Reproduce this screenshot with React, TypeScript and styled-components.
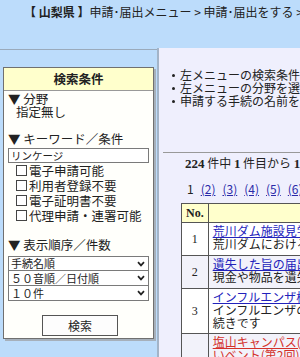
import React from 'react'
import styled, { createGlobalStyle } from 'styled-components'

const GlobalStyle = createGlobalStyle`
  html, body {
    margin: 0;
    padding: 0;
    overflow: hidden;
    background: #bcdcfb;
  }
  body {
    font-family: "Noto Sans CJK JP", "Noto Sans", sans-serif;
    color: #222;
  }
`

const Page = styled.div`
  width: 300px;
  height: 357px;
  overflow: hidden;
  background: #bcdcfb;
`

const Breadcrumb = styled.div`
  height: 48px;
  box-sizing: border-box;
  padding: 4px 0 0 24px;
  font-size: 12px;
  line-height: 16px;
  white-space: nowrap;
  color: #222;

  b {
    font-weight: bold;
  }
`

const Main = styled.div`
  display: flex;
  width: 520px;
`

const SideColumn = styled.div`
  width: 157px;
  flex: none;
  margin-top: 1px;
  border-top: 1px solid #9aaabb;
  padding: 17px 0 0 3px;
  box-sizing: border-box;
`

const SearchPanel = styled.div`
  width: 151px;
  box-sizing: border-box;
  background: #fffffb;
  border: 1px solid #707070;
  box-shadow: 2px 2px 0 #a6b0bb;
  padding-bottom: 2px;
`

const PanelTitle = styled.div`
  height: 22px;
  line-height: 22px;
  background: #ffffcc;
  border-bottom: 1px solid #999;
  text-align: center;
  font-size: 12.5px;
  font-weight: bold;
`

const Section = styled.div<{ $top?: number }>`
  padding: 0 4px;
  margin-top: ${({ $top }) => $top ?? 0}px;
`

const Heading = styled.div`
  font-size: 12.5px;
  line-height: 13px;
  height: 13px;
  white-space: nowrap;
`

const Value = styled.div`
  font-size: 12.5px;
  line-height: 13px;
  height: 13px;
  padding-left: 8px;
`

const KeywordInput = styled.input`
  display: block;
  width: 141px;
  height: 15px;
  box-sizing: border-box;
  margin: 3px 0 0;
  padding: 0 2px;
  border: 1px solid #7a7a7a;
  font-family: inherit;
  font-size: 10.5px;
  line-height: 13px;
  color: #222;
  background: #fff;
  outline: none;
`

const CheckRow = styled.label`
  display: flex;
  align-items: center;
  height: 15px;
  padding-left: 8px;
  font-size: 12.5px;
  line-height: 15px;
  white-space: nowrap;
`

const Box = styled.span`
  display: inline-block;
  width: 9px;
  height: 9px;
  border: 1px solid #444;
  margin-right: 2px;
  background: #fff;
`

const SelectBox = styled.div<{ $first?: boolean }>`
  display: flex;
  align-items: center;
  justify-content: space-between;
  width: 141px;
  height: 15px;
  box-sizing: border-box;
  margin-top: ${({ $first }) => ($first ? 5 : 0)}px;
  border: 1px solid #7a7a7a;
  border-top-width: ${({ $first }) => ($first ? 1 : 0)}px;
  padding: 0 3px 0 2px;
  background: #fff;
  font-size: 11px;
  line-height: 13px;
  white-space: nowrap;
`

const Chevron = () => (
  <svg width="8" height="6" viewBox="0 0 8 6">
    <path d="M1 1.2 L4 4.4 L7 1.2" fill="none" stroke="#222" strokeWidth="1.7" />
  </svg>
)

const ButtonRow = styled.div`
  display: flex;
  justify-content: center;
  margin-top: 14px;
`

const SearchButton = styled.button`
  width: 76px;
  height: 21px;
  padding: 0;
  border: 1px solid #555;
  background: #fdfdfd;
  font-family: inherit;
  font-size: 12px;
  line-height: 19px;
  color: #222;
  margin-left: 3px;
`

const ContentColumn = styled.div`
  flex: 1;
  height: 320px;
  background: #efeffd;
  border-left: 2px solid #a3b4c8;
`

const Notes = styled.ul`
  margin: 20px 0 0;
  padding-left: 21px;
  font-size: 12px;
  line-height: 13px;
  white-space: nowrap;

  li {
    list-style: none;
    position: relative;
    height: 13px;
  }
  li::before {
    content: '';
    position: absolute;
    left: -8px;
    top: 6px;
    width: 3px;
    height: 3px;
    border-radius: 50%;
    background: #222;
  }
`

const Rule = styled.hr`
  margin: 45px 0 0 4px;
  border: 0;
  border-top: 1px solid #999;
`

const Count = styled.div`
  margin: 2px 0 0 26px;
  font-size: 12px;
  line-height: 16px;
  white-space: nowrap;

  b {
    font-family: "Liberation Serif", serif;
    font-size: 13px;
  }
`

const Pager = styled.div`
  margin: 10px 0 0 28px;
  font-size: 12px;
  line-height: 14px;
  white-space: nowrap;

  a {
    color: #2a2aa8;
    text-decoration: underline;
    margin-left: 7px;
  }
`

const ResultTable = styled.table`
  margin: 7px 0 0 22px;
  border-collapse: collapse;
  width: 400px;
  font-size: 12px;
  background: #fff;

  th, td {
    border: 1px solid #555;
    padding: 0 4px;
  }
  th {
    background: #ffffcc;
    height: 18px;
    font-family: "Liberation Serif", serif;
    font-size: 12px;
    text-align: left;
  }
`

const Row = styled.tr<{ $shade?: boolean }>`
  background: ${({ $shade }) => ($shade ? '#f2f2fa' : '#fff')};
`

const NoCell = styled.td`
  width: 17px;
  text-align: center;
  font-family: "Liberation Serif", serif;
  font-size: 12px;
`

const TitleCell = styled.td<{ $height: number }>`
  height: ${({ $height }) => $height}px;
  line-height: 13px;
  white-space: nowrap;
  vertical-align: top;
  padding-top: 1px !important;

  a {
    color: #2222bb;
    text-decoration: underline;
  }
  a.alert {
    color: #d4302a;
  }
`

const Desc = styled.div<{ $alert?: boolean }>`
  color: ${({ $alert }) => ($alert ? '#d4302a' : '#222')};
  text-decoration: ${({ $alert }) => ($alert ? 'underline' : 'none')};
`

const results = [
  { no: '1', title: '荒川ダム施設見学', desc: ['荒川ダムにおける施設見学'], h: 31 },
  { no: '2', title: '遺失した旨の届出', desc: ['現金や物品を遺失した'], h: 31 },
  { no: '3', title: 'インフルエンザ様疾患', desc: ['インフルエンザの集団発生', '続きです'], h: 43 },
  { no: '', title: '塩山キャンパス(高校', desc: ['いベント(第2回)'], h: 40, alert: true },
]

export default function App() {
  return (
    <Page>
      <GlobalStyle />
      <Breadcrumb>
        <b>【 山梨県 】</b>申請･届出メニュー &gt; 申請･届出をする &gt;
      </Breadcrumb>
      <Main>
        <SideColumn>
          <SearchPanel>
            <PanelTitle>検索条件</PanelTitle>
            <Section $top={1}>
              <Heading>▼ 分野</Heading>
              <Value>指定無し</Value>
            </Section>
            <Section $top={14}>
              <Heading>▼ キーワード／条件</Heading>
              <KeywordInput defaultValue="リンケージ" />
              <CheckRow><Box />電子申請可能</CheckRow>
              <CheckRow><Box />利用者登録不要</CheckRow>
              <CheckRow><Box />電子証明書不要</CheckRow>
              <CheckRow><Box />代理申請・連署可能</CheckRow>
            </Section>
            <Section $top={15}>
              <Heading>▼ 表示順序／件数</Heading>
              <SelectBox $first>手続名順<Chevron /></SelectBox>
              <SelectBox>５０音順／日付順<Chevron /></SelectBox>
              <SelectBox>１０件<Chevron /></SelectBox>
            </Section>
            <ButtonRow>
              <SearchButton>検索</SearchButton>
            </ButtonRow>
          </SearchPanel>
        </SideColumn>
        <ContentColumn>
          <Notes>
            <li>左メニューの検索条件を指定して</li>
            <li>左メニューの分野を選択して</li>
            <li>申請する手続の名前をクリック</li>
          </Notes>
          <Rule />
          <Count>
            <b>224</b> 件中 <b>1</b> 件目から <b>10</b> 件目
          </Count>
          <Pager>
            1<a>(2)</a><a>(3)</a><a>(4)</a><a>(5)</a><a>(6)</a>
          </Pager>
          <ResultTable>
            <thead>
              <tr>
                <th style={{ width: 17 }}>No.</th>
                <th />
              </tr>
            </thead>
            <tbody>
              {results.map((r, i) => (
                <Row key={i} $shade={i % 2 === 1}>
                  <NoCell>{r.no}</NoCell>
                  <TitleCell $height={r.h}>
                    <a className={r.alert ? 'alert' : undefined}>{r.title}</a>
                    {r.desc.map((d) => (
                      <Desc key={d} $alert={r.alert}>{d}</Desc>
                    ))}
                  </TitleCell>
                </Row>
              ))}
            </tbody>
          </ResultTable>
        </ContentColumn>
      </Main>
    </Page>
  )
}
